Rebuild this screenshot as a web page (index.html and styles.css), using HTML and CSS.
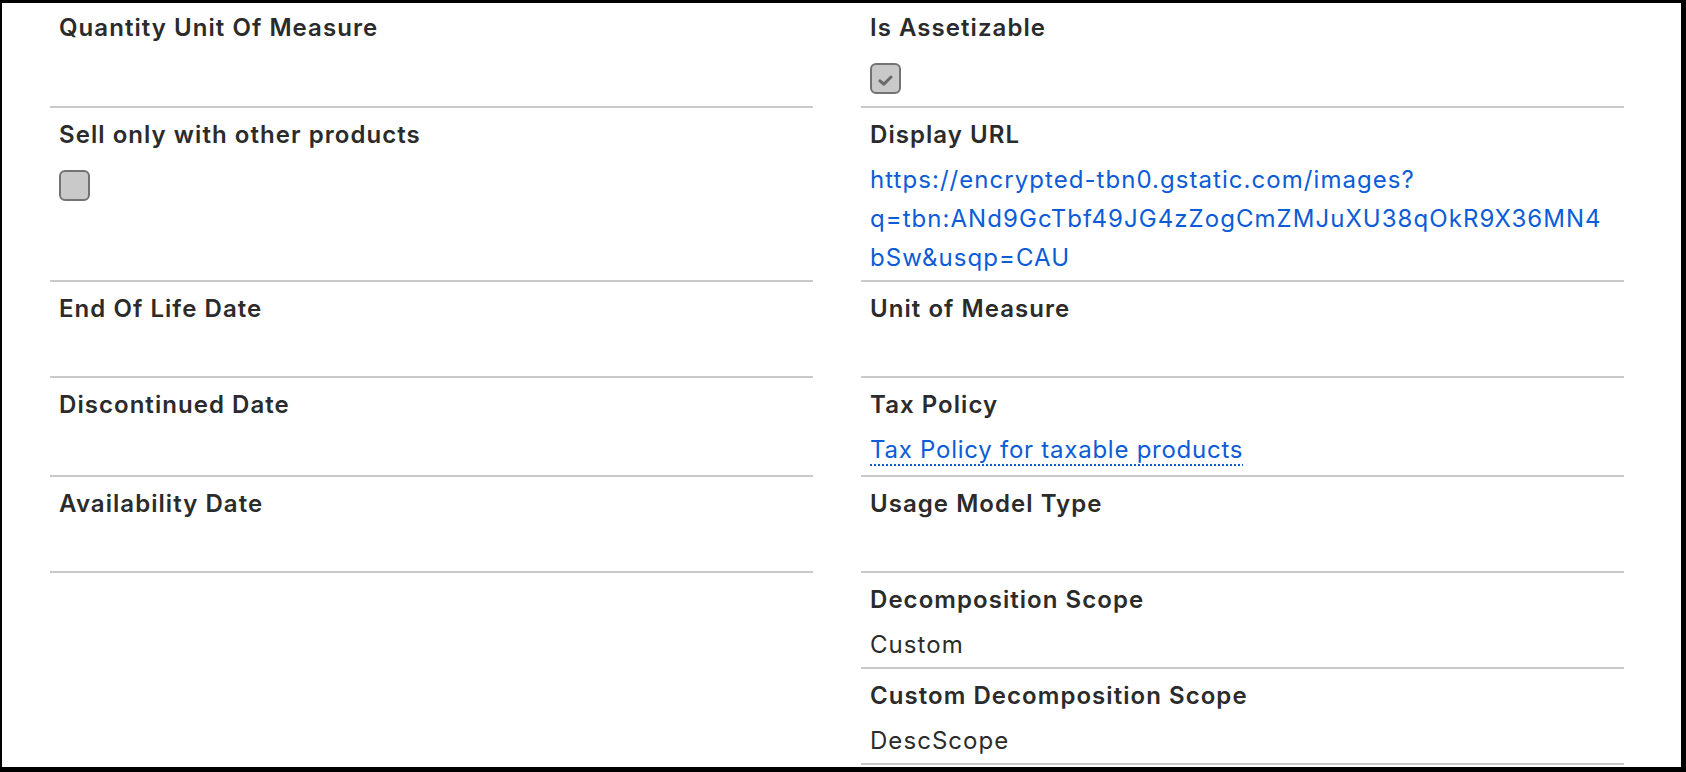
FILE: index.html
```html
<!DOCTYPE html>
<html lang="en">
<head>
	<meta charset="UTF-8">
	<title>Product Detail</title>
	<link rel="stylesheet" href="styles.css">
</head>
<body>
	<div class="frame">
		<div class="record">
			<div class="field">
				<div class="label">Quantity Unit Of Measure</div>
				<div class="value"></div>
			</div>
			<div class="field">
				<div class="label">Is Assetizable</div>
				<div class="value">
					<span class="checkbox">
						<svg class="tick" viewBox="0 0 15 11" width="15" height="11"><path d="M2 5.8 L5.8 9.2 L13 2" fill="none" stroke="#6a6a6a" stroke-width="3" stroke-linecap="round" stroke-linejoin="round"/></svg>
					</span>
				</div>
			</div>

			<div class="field">
				<div class="label">Sell only with other products</div>
				<div class="value">
					<span class="checkbox"></span>
				</div>
			</div>
			<div class="field">
				<div class="label">Display URL</div>
				<div class="value">
					<a class="url" href="#">https://encrypted-tbn0.gstatic.com/images?<br>q=tbn:ANd9GcTbf49JG4zZogCmZMJuXU38qOkR9X36MN4<br>bSw&amp;usqp=CAU</a>
				</div>
			</div>

			<div class="field">
				<div class="label">End Of Life Date</div>
				<div class="value"></div>
			</div>
			<div class="field">
				<div class="label">Unit of Measure</div>
				<div class="value"></div>
			</div>

			<div class="field">
				<div class="label">Discontinued Date</div>
				<div class="value"></div>
			</div>
			<div class="field">
				<div class="label">Tax Policy</div>
				<div class="value has-lookup">
					<a class="lookup" href="#">Tax Policy for taxable products</a>
				</div>
			</div>

			<div class="field">
				<div class="label">Availability Date</div>
				<div class="value"></div>
			</div>
			<div class="field">
				<div class="label">Usage Model Type</div>
				<div class="value"></div>
			</div>

			<div class="field col-right">
				<div class="label">Decomposition Scope</div>
				<div class="value">Custom</div>
			</div>
			<div class="field col-right">
				<div class="label">Custom Decomposition Scope</div>
				<div class="value">DescScope</div>
			</div>
		</div>
	</div>
</body>
</html>
```

FILE: styles.css
```css
html,body{
	margin:0;
	padding:0;
	background:#fff;
}
.frame{
	box-sizing:border-box;
	width:1686px;
	height:772px;
	overflow:hidden;
	border-style:solid;
	border-color:#000;
	border-width:3px 5px 5px 2px;
	font-family:Inter,"Liberation Sans",Arial,sans-serif;
	color:#2b2b2b;
	letter-spacing:1.05px;
}
.record{
	display:grid;
	grid-template-columns:1fr 1fr;
	column-gap:48px;
	margin-top:-2px;
	padding:0 57px 0 48px;
}
.field{
	padding:9px 8px 3px 9px;
	border-bottom:2px solid #c9c9c9;
}
.field.col-right{grid-column:2;}
.label{
	font-size:24px;
	line-height:36px;
	font-weight:600;
	margin-bottom:7px;
}
.value{
	display:flow-root;
	font-size:24px;
	line-height:39px;
	min-height:39px;
}
.value.has-lookup{padding-bottom:3px;}
.value a{color:#0b5cd6;text-decoration:none;}
.value a.lookup{
	letter-spacing:0.75px;
	text-decoration:underline dotted;
	text-decoration-thickness:2px;
	text-underline-offset:6px;
}
.checkbox{
	box-sizing:border-box;
	display:flex;
	align-items:center;
	justify-content:center;
	width:31px;
	height:31px;
	margin:10px 0 9px;
	background:#c9c9c9;
	border:2px solid #737373;
	border-radius:6px;
}
.checkbox .tick{margin:4px 1px 0 0;}
```
